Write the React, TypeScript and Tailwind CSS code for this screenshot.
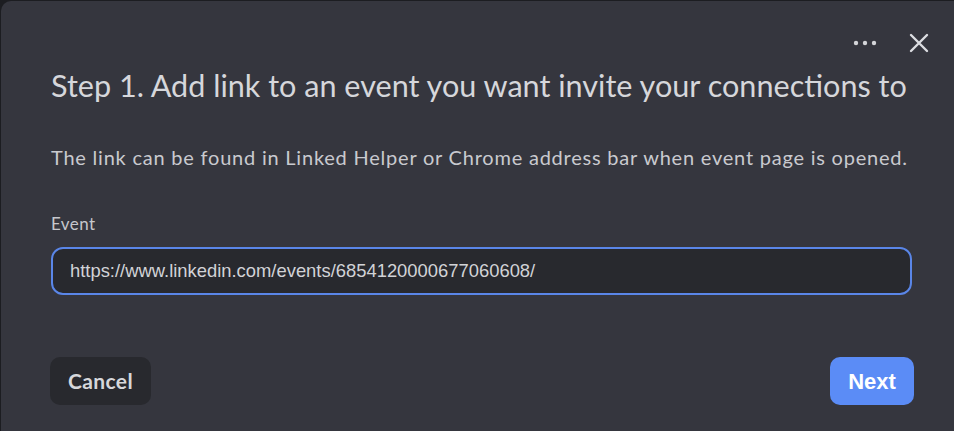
import React from "react";

export default function App() {
  return (
    <div className="w-[954px] h-[431px] bg-[#1c1d21] pl-px pt-px overflow-hidden">
      <div className="w-[953px] h-[440px] bg-[#35363e] rounded-tl-[10px] flex flex-col pl-[49px]">
        <div className="flex justify-end items-center gap-[32px] pt-[33px] h-[54px] pr-[25px]">
          <svg width="24" height="6" viewBox="0 0 24 6" className="mt-[-4px]">
            <circle cx="3" cy="3" r="2.2" fill="#d4d5d9" />
            <circle cx="12" cy="3" r="2.2" fill="#d4d5d9" />
            <circle cx="21" cy="3" r="2.2" fill="#d4d5d9" />
          </svg>
          <svg width="20" height="20" viewBox="0 0 20 20" className="mt-[-4px]">
            <path d="M2 2 L18 18 M18 2 L2 18" stroke="#dcdde1" strokeWidth="2.4" strokeLinecap="round" />
          </svg>
        </div>
        <h1 className="text-[30.6px] leading-[36px] text-[#d6d7db] font-['Lato',sans-serif] mt-[13px] pl-[1px] whitespace-nowrap">
          Step 1. Add link to an event you want invite your connections to
        </h1>
        <p className="text-[20px] leading-[26px] text-[#c9cacf] font-['Lato',sans-serif] mt-[40px] pl-[1px] tracking-[0.78px] whitespace-nowrap">
          The link can be found in Linked Helper or Chrome address bar when event page is opened.
        </p>
        <label className="text-[17px] leading-[20px] text-[#c6c7cc] font-['Lato',sans-serif] mt-[44px] pl-[1px] tracking-[0.4px]">
          Event
        </label>
        <div className="mt-[13px] ml-[1px] w-[861px] h-[48px] rounded-[12px] border-2 border-[#5a86e8] bg-[#28292e] flex items-center pl-[17px]">
          <span className="text-[18.4px] text-[#d2d3d7] font-['Liberation_Sans',Arial,sans-serif]">
            https://www.linkedin.com/events/6854120000677060608/
          </span>
        </div>
        <div className="flex justify-between items-center mt-[62px] w-[864px]">
          <button className="w-[101px] h-[48px] rounded-[10px] bg-[#28292e] text-[#d6d7db] text-[21px] font-bold font-['Lato',sans-serif] tracking-[0.4px]">
            Cancel
          </button>
          <button className="w-[84px] h-[48px] rounded-[10px] bg-[#5b8cf6] text-white text-[22px] font-bold font-['Liberation_Sans',Arial,sans-serif]">
            Next
          </button>
        </div>
      </div>
    </div>
  );
}
